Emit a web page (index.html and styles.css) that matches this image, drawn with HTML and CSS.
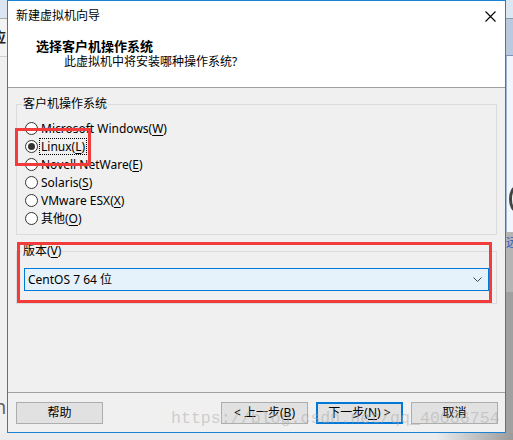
FILE: index.html
```html
<!DOCTYPE html>
<html lang="zh-CN">
<head>
<meta charset="utf-8">
<title>新建虚拟机向导</title>
<link rel="stylesheet" href="styles.css">
</head>
<body>
<div class="desk">
  <div class="strip strip-left">
    <div class="sl-top"></div>
    <div class="sl-mid"><span class="sl-char">应</span></div>
    <div class="sl-rest"></div>
    <div class="sl-n">n</div>
  </div>
  <div class="dialog">
    <div class="top">
      <div class="titlebar">
        <span class="title">新建虚拟机向导</span>
        <svg class="close" width="11" height="11" viewBox="0 0 11 11"><path d="M0.5 0.5 L10.5 10.5 M10.5 0.5 L0.5 10.5" stroke="#000" stroke-width="1.1" fill="none"/></svg>
      </div>
      <div class="header">
        <div class="h-title">选择客户机操作系统</div>
        <div class="h-sub">此虚拟机中将安装哪种操作系统?</div>
      </div>
    </div>
    <div class="content">
      <fieldset class="group g-os">
        <legend>客户机操作系统</legend>
        <div class="radio"><span class="dot"></span><span class="lbl">Microsoft Windows(<u>W</u>)</span></div>
        <div class="radio checked"><span class="dot"></span><span class="lbl focus">Linux(<u>L</u>)</span></div>
        <div class="radio"><span class="dot"></span><span class="lbl">Novell NetWare(<u>E</u>)</span></div>
        <div class="radio"><span class="dot"></span><span class="lbl">Solaris(<u>S</u>)</span></div>
        <div class="radio"><span class="dot"></span><span class="lbl">VMware ESX(<u>X</u>)</span></div>
        <div class="radio"><span class="dot"></span><span class="lbl">其他(<u>O</u>)</span></div>
      </fieldset>
      <fieldset class="group g-ver">
        <legend>版本(<u>V</u>)</legend>
        <div class="combo">
          <span class="combo-text">CentOS 7 64 位</span>
          <svg class="chev" width="9" height="5" viewBox="0 0 9 5"><path d="M0.5 0.5 L4.5 4.5 L8.5 0.5" stroke="#444" stroke-width="1" fill="none"/></svg>
        </div>
      </fieldset>
    </div>
    <div class="footer">
      <button class="btn">帮助</button>
      <div class="spacer"></div>
      <button class="btn">&lt; 上一步(<u>B</u>)</button>
      <button class="btn default">下一步(<u>N</u>) &gt;</button>
      <button class="btn">取消</button>
    </div>
  </div>
  <div class="strip strip-right">
    <div class="sr-top"></div>
    <div class="sr-band"></div>
    <div class="sr-light"><span class="sr-circle"></span></div>
    <div class="sr-grey"><span class="sr-char">远</span></div>
    <div class="sr-dark"></div>
  </div>
</div>
<div class="shadow-row"></div>
<div class="mark mark-linux"></div>
<div class="mark mark-ver"></div>
<div class="watermark">https://blog.csdn.net/qq_40086754</div>
</body>
</html>
```

FILE: styles.css
```css
* { box-sizing: border-box; }
html, body { margin: 0; padding: 0; }
body {
  width: 513px;
  height: 440px;
  overflow: hidden;
  background: #e9e9e9;
  font-family: "Noto Sans", "Noto Sans CJK SC", sans-serif;
  font-size: 12px;
  color: #000;
  position: relative;
}
u { text-decoration: underline; text-underline-offset: 2px; }

.desk { display: flex; height: 433px; }

.strip { display: flex; flex-direction: column; overflow: hidden; }
.strip-left { width: 7px; background: #f0f0f0; }
.sl-top { height: 19px; background: #dbe6f2; border-bottom: 1px solid #a9a9a9; }
.sl-mid { height: 38px; background: #f3f3f3; border-bottom: 1px solid #cfcfcf; position: relative; }
.sl-char { position: absolute; left: -8px; top: 10px; font-size: 14px; font-weight: bold; line-height: 16px; color: #222; }
.sl-rest { flex: 1; background: #f0f0f0; }
.sl-n { height: 36px; font-size: 20px; line-height: 20px; color: #666; text-indent: -6px; background: #f0f0f0; }

.strip-right { flex: 1; background: #eaeaea; }
.sr-top { height: 19px; background: #dce7f4; border-bottom: 1px solid #8e9aa8; }
.sr-band { height: 37px; background: #b9c9de; border-bottom: 1px solid #7d95b8; }
.sr-light { height: 176px; background: #f2f5f9; border-left: 1px solid #9fb8d6; position: relative; }
.sr-circle { position: absolute; left: 2px; top: 130px; width: 14px; height: 26px; border: 3px solid #444; border-radius: 50%; }
.sr-grey { height: 60px; background: #b4b4b4; position: relative; }
.sr-char { position: absolute; left: 0; top: 4px; font-size: 12px; line-height: 14px; color: #3060c0; }
.sr-dark { flex: 1; background: #a0a0a0; }

.dialog {
  width: 499px;
  height: 433px;
  border: 1px solid #1883d7;
  background: #f0f0f0;
  display: flex;
  flex-direction: column;
}

.top { background: #fff; border-bottom: 1px solid #a0a0a0; }
.titlebar {
  height: 29px;
  display: flex;
  align-items: center;
  justify-content: space-between;
  padding: 0 9px 0 8px;
}
.title { line-height: 16px; padding-top: 1px; }
.close { display: block; margin-top: 1px; }

.header {
  height: 57px;
  padding: 8px 0 0 28px;
}
.h-title { font-weight: bold; font-size: 13px; line-height: 16px; }
.h-sub { line-height: 16px; padding-left: 28px; }

.content { padding: 0 8px; display: flex; flex-direction: column; }
.group {
  margin: 8px 0 0 0;
  border: 1px solid #dcdcdc;
  padding: 0 7px;
  min-width: 0;
}
.group legend {
  padding: 0 1px;
  margin-left: -2px;
  line-height: 16px;
  height: 16px;
}
.g-os { padding-top: 7px; padding-bottom: 7px; }
.g-ver { padding-top: 9px; padding-bottom: 12px; }

.radio { height: 18px; display: flex; align-items: center; }
.dot {
  width: 13px;
  height: 13px;
  border: 1px solid #333;
  border-radius: 50%;
  background: #fff;
  margin-left: 1px;
  margin-right: 1px;
  display: flex;
  align-items: center;
  justify-content: center;
  flex: none;
}
.radio.checked .dot::after {
  content: "";
  width: 7px;
  height: 7px;
  border-radius: 50%;
  background: #333;
}
.lbl {
  line-height: 15px;
  padding: 0 1px;
  border: 1px dotted transparent;
}
.lbl.focus { border-color: #000; }

.combo {
  height: 23px;
  border: 1px solid #0078d7;
  background: #e5f1fb;
  display: flex;
  align-items: center;
  justify-content: space-between;
  padding: 0 6px 0 3px;
}
.combo-text { line-height: 16px; padding-top: 1px; }
.chev { display: block; }

.footer {
  margin-top: auto;
  border-top: 1px solid #a0a0a0;
  padding: 9px 7px 8px 8px;
  display: flex;
  gap: 8px;
}
.spacer { flex: 1; }
.btn {
  width: 87px;
  height: 22px;
  border: 1px solid #adadad;
  background: #e1e1e1;
  font: inherit;
  color: #000;
  padding: 0;
  line-height: 18px;
}
.btn.default { border: 2px solid #0078d7; }

.shadow-row {
  height: 7px;
  background: linear-gradient(to right, #ececec 0%, #ececec 85%, #9a9a9a 100%);
}

.mark {
  position: absolute;
  border: 3px solid #f23c3c;
}
.mark-linux { left: 15px; top: 128px; width: 76px; height: 38px; }
.mark-ver { left: 17px; top: 242px; width: 475px; height: 61px; }

.watermark {
  position: absolute;
  left: 171px;
  top: 409px;
  font-family: "Liberation Mono", monospace;
  font-size: 16.6px;
  line-height: 20px;
  color: rgba(170, 170, 170, 0.5);
  white-space: nowrap;
}
```
